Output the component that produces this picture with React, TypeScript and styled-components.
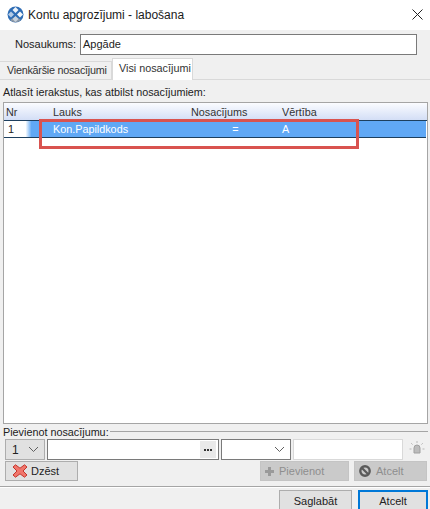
import { createGlobalStyle, styled } from "styled-components"

const Global = createGlobalStyle`
	html, body {
		margin: 0;
		padding: 0;
		background: #f0f0f0;
	}
	* {
		box-sizing: border-box;
	}
`

export default function App() {
	return (
		<>
			<Global />
			<Window>
				<TitleBar>
					<AppIcon />
					<Title>Kontu apgrozījumi - labošana</Title>
					<Close>
						<svg width="11" height="11" viewBox="0 0 11 11">
							<path d="M0.5 0.5L10.5 10.5M10.5 0.5L0.5 10.5" stroke="#222" strokeWidth="1" fill="none" />
						</svg>
					</Close>
				</TitleBar>
				<NameRow>
					<NameLabel>Nosaukums:</NameLabel>
					<NameInput>Apgāde</NameInput>
				</NameRow>
				<Tabs>
					<Tab>Vienkāršie nosacījumi</Tab>
					<Tab $active>Visi nosacījumi</Tab>
				</Tabs>
				<Panel>
					<Hint>Atlasīt ierakstus, kas atbilst nosacījumiem:</Hint>
					<Table>
						<HeadRow>
							<NrCell>Nr</NrCell>
							<FieldCell>Lauks</FieldCell>
							<CondCell>Nosacījums</CondCell>
							<ValueCell>Vērtība</ValueCell>
						</HeadRow>
						<DataRow>
							<RowNumber>1</RowNumber>
							<FieldCell>Kon.Papildkods</FieldCell>
							<CondCell $center>=</CondCell>
							<ValueCell>A</ValueCell>
						</DataRow>
						<Highlight />
					</Table>
					<AddGroup>
						<Legend>Pievienot nosacījumu:</Legend>
						<GroupLine />
					</AddGroup>
					<Controls>
						<NumberSelect>
							1
							<Chevron />
						</NumberSelect>
						<FieldInput>
							<DotsButton>
								<Dot />
								<Dot />
								<Dot />
							</DotsButton>
						</FieldInput>
						<CondSelect>
							<Chevron />
						</CondSelect>
						<ValueInput />
						<BulbIcon />
					</Controls>
					<Actions>
						<ActionButton>
							<DeleteIcon />
							Dzēst
						</ActionButton>
						<RightActions>
							<ActionButton $disabled $width={89}>
								<PlusIcon />
								Pievienot
							</ActionButton>
							<ActionButton $disabled $width={73}>
								<BlockIcon />
								Atcelt
							</ActionButton>
						</RightActions>
					</Actions>
				</Panel>
				<Footer>
					<FooterButton>Saglabāt</FooterButton>
					<FooterButton $primary>Atcelt</FooterButton>
				</Footer>
			</Window>
		</>
	)
}

const Chevron = () => (
	<svg width="11" height="7" viewBox="0 0 11 7">
		<path d="M1 1L5.5 5.5L10 1" stroke="#606060" strokeWidth="1" fill="none" />
	</svg>
)

const AppIcon = () => (
	<IconSvg width="17" height="17" viewBox="0 0 17 17">
		<circle cx="8.5" cy="8.5" r="8" fill="#2f6db5" />
		<path d="M3 14A8 8 0 0 0 14 14L8.5 10.5Z" fill="#8a97a6" />
		<path d="M8.5 1L11.5 4L8.5 7L5.5 4Z" fill="#eef3f9" />
		<path d="M8.5 10L11.5 13L8.5 16L5.5 13Z" fill="#c9d3de" />
		<path d="M4 5.5L7 8.5L4 11.5L1 8.5Z" fill="#b4cbe6" />
		<path d="M13 5.5L16 8.5L13 11.5L10 8.5Z" fill="#f5f8fb" />
	</IconSvg>
)

const DeleteIcon = () => (
	<svg width="16" height="14" viewBox="0 0 16 14">
		<path
			d="M3.5 0.8L8 4.2L12.5 0.8L15 3L11 7L15 11L12.5 13.2L8 9.8L3.5 13.2L1 11L5 7L1 3Z"
			fill="#f0766c"
			stroke="#c4352b"
			strokeWidth="1"
		/>
	</svg>
)

const PlusIcon = () => (
	<svg width="9" height="9" viewBox="0 0 9 9">
		<path d="M3 0H6V3H9V6H6V9H3V6H0V3H3Z" fill="#9a9a9a" />
	</svg>
)

const BlockIcon = () => (
	<svg width="12" height="12" viewBox="0 0 12 12">
		<circle cx="6" cy="6" r="4.7" fill="none" stroke="#5a5a5a" strokeWidth="2.4" />
		<path d="M3 3L9 9" stroke="#5a5a5a" strokeWidth="2.2" />
	</svg>
)

const BulbIcon = () => (
	<Bulb width="18" height="18" viewBox="0 0 18 18">
		<path d="M6 8A3 3 0 0 1 12 8V13H6Z" fill="#bcbcbc" stroke="#a0a0a0" />
		<path
			d="M9 1V3M3.2 3.2L4.6 4.6M14.8 3.2L13.4 4.6M1.5 9H3.5M16.5 9H14.5"
			stroke="#b8b8b8"
			strokeWidth="1"
			fill="none"
		/>
	</Bulb>
)

//style

const Window = styled.div`
	width: 430px;
	height: 509px;
	display: flex;
	flex-direction: column;
	overflow: hidden;
	background: #f0f0f0;
	color: #222;
	font-family: "Liberation Sans", Arial, sans-serif;
	font-size: 10.8px;
`

const TitleBar = styled.div`
	height: 30px;
	flex: none;
	display: flex;
	align-items: center;
	padding: 0 7px 0 7px;
	background: #fff;
`

const IconSvg = styled.svg`
	flex: none;
	margin-top: -2px;
`

const Title = styled.div`
	margin-left: 4px;
	font-size: 12px;
	color: #1a1a1a;
`

const Close = styled.div`
	margin-left: auto;
	margin-top: -2px;
	display: flex;
`

const NameRow = styled.div`
	height: 28px;
	flex: none;
	display: flex;
	align-items: center;
	padding: 0 13px 0 15px;
`

const NameLabel = styled.div`
	width: 65px;
	flex: none;
	font-size: 11px;
`

const NameInput = styled.div`
	flex: 1;
	height: 21px;
	line-height: 19px;
	padding-left: 2px;
	font-size: 11px;
	background: #fff;
	border: 1px solid #7a7a7a;
`

const Tabs = styled.div`
	height: 22px;
	flex: none;
	display: flex;
	align-items: flex-end;
	border-bottom: 1px solid #d9d9d9;
`

const Tab = styled.div<{ $active?: boolean }>`
	width: ${(p) => (p.$active ? 81 : 112)}px;
	height: ${(p) => (p.$active ? 22 : 18)}px;
	line-height: ${(p) => (p.$active ? 19 : 16)}px;
	padding-left: ${(p) => (p.$active ? 6 : 7)}px;
	margin-bottom: ${(p) => (p.$active ? -1 : 0)}px;
	white-space: nowrap;
	letter-spacing: ${(p) => (p.$active ? 0 : -0.25)}px;
	color: #333;
	background: ${(p) => (p.$active ? "#fff" : "#f0f0f0")};
	border: 1px solid #d9d9d9;
	border-left-width: ${(p) => (p.$active ? 1 : 0)}px;
	border-bottom: none;
`

const Panel = styled.div`
	flex: 1;
	display: flex;
	flex-direction: column;
	min-height: 0;
	padding: 2px 2px 0 3px;
`

const Hint = styled.div`
	height: 20px;
	line-height: 20px;
	flex: none;
`

const Table = styled.div`
	position: relative;
	height: 322px;
	flex: none;
	background: #fff;
	border: 1px solid #a5a5a5;
`

const HeadRow = styled.div`
	height: 18px;
	display: flex;
	align-items: center;
	color: #333;
	background: linear-gradient(#fbfcff, #d3def6);
	border-bottom: 1px solid #1d3f5e;
`

const DataRow = styled.div`
	height: 17px;
	margin-right: 1px;
	display: flex;
	align-items: center;
	color: #fff;
	background: #60a8f5;
	border-bottom: 1px solid #1d3f5e;
`

const NrCell = styled.div`
	width: 49px;
	padding-left: 2px;
	flex: none;
`

const RowNumber = styled.div`
	width: 49px;
	height: 100%;
	padding-left: 4px;
	line-height: 16px;
	flex: none;
	color: #222;
	background: linear-gradient(90deg, #fff 0, #fff 44%, #60a8f5 56%);
`

const FieldCell = styled.div`
	width: 138px;
	flex: none;
`

const CondCell = styled.div<{ $center?: boolean }>`
	width: 91px;
	flex: none;
	padding-right: 2px;
	text-align: ${(p) => (p.$center ? "center" : "left")};
`

const ValueCell = styled.div`
	flex: 1;
`

const Highlight = styled.div`
	position: absolute;
	left: 35px;
	top: 16px;
	width: 320px;
	height: 30px;
	border: 3px solid #d9534f;
`

const AddGroup = styled.div`
	display: flex;
	align-items: center;
	height: 15px;
	flex: none;
`

const Legend = styled.div`
	flex: none;
	margin-right: 1px;
`

const GroupLine = styled.div`
	flex: 1;
	height: 1px;
	margin-top: -1px;
	background: #a5a5a5;
`

const Controls = styled.div`
	height: 21px;
	flex: none;
	display: flex;
	align-items: center;
	gap: 2px;
	padding-left: 2px;
`

const NumberSelect = styled.div`
	width: 40px;
	height: 21px;
	display: flex;
	align-items: center;
	justify-content: space-between;
	padding: 0 5px 0 6px;
	font-size: 12px;
	background: #e1e1e1;
	border: 1px solid #adadad;
`

const FieldInput = styled.div`
	width: 172px;
	height: 21px;
	display: flex;
	justify-content: flex-end;
	padding: 1px 2px 1px 1px;
	background: #fff;
	border: 1px solid #7a7a7a;
`

const DotsButton = styled.div`
	width: 16px;
	display: flex;
	align-items: center;
	justify-content: center;
	gap: 1px;
	background: #e9e9e9;
`

const Dot = styled.span`
	width: 2px;
	height: 2px;
	background: #333;
`

const CondSelect = styled.div`
	width: 70px;
	height: 21px;
	display: flex;
	align-items: center;
	justify-content: flex-end;
	padding-right: 5px;
	background: #fff;
	border: 1px solid #7a7a7a;
`

const ValueInput = styled.div`
	width: 110px;
	height: 21px;
	background: #fff;
	border: 1px solid #d9d9d9;
`

const Bulb = styled.svg`
	flex: none;
	margin-left: 3px;
	margin-top: -1px;
`

const Actions = styled.div`
	height: 20px;
	margin-top: 1px;
	flex: none;
	display: flex;
	justify-content: space-between;
	padding: 0 1px 0 2px;
`

const RightActions = styled.div`
	display: flex;
	gap: 5px;
`

const ActionButton = styled.div<{ $disabled?: boolean; $width?: number }>`
	width: ${(p) => p.$width || 73}px;
	height: 20px;
	display: flex;
	align-items: center;
	gap: ${(p) => (p.$disabled ? 5 : 3)}px;
	padding-left: ${(p) => (p.$disabled ? 4 : 6)}px;
	font-size: 11px;
	color: ${(p) => (p.$disabled ? "#8e8e8e" : "#222")};
	background: ${(p) => (p.$disabled ? "#cacaca" : "#e1e1e1")};
	border: 1px solid ${(p) => (p.$disabled ? "#c4c4c4" : "#adadad")};
`

const Footer = styled.div`
	height: 23px;
	flex: none;
	display: flex;
	justify-content: flex-end;
	gap: 6px;
	padding: 3px 2px 0 0;
	border-top: 1px solid #a5a5a5;
	box-shadow: inset 0 1px #fff;
`

const FooterButton = styled.div<{ $primary?: boolean }>`
	width: ${(p) => (p.$primary ? 70 : 73)}px;
	height: 24px;
	flex: none;
	text-align: center;
	line-height: ${(p) => (p.$primary ? 18 : 20)}px;
	font-size: 11px;
	background: #e1e1e1;
	border: ${(p) => (p.$primary ? "2px solid #0078d7" : "1px solid #adadad")};
`
